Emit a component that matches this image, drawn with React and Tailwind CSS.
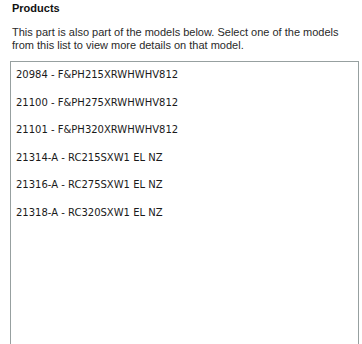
export default function App() {
  const items = [
    "20984 - F&PH215XRWHWHV812",
    "21100 - F&PH275XRWHWHV812",
    "21101 - F&PH320XRWHWHV812",
    "21314-A - RC215SXW1 EL NZ",
    "21316-A - RC275SXW1 EL NZ",
    "21318-A - RC320SXW1 EL NZ",
  ];
  return (
    <div className="w-[362px] h-[344px] overflow-hidden bg-white pt-[2px]">
      <div className="pl-[12px] pr-[8px] text-[11px] leading-[13px] text-[#222]" style={{ fontFamily: '"Liberation Sans", Arial, sans-serif' }}>
        <h2 className="font-bold text-[11px] leading-[13px] text-[#111]">Products</h2>
        <p className="mt-[11px] text-[#2a2a2a]">
          This part is also part of the models below. Select one of the models from this list to view more details on that model.
        </p>
      </div>
      <div
        className="ml-[10px] mt-[9px] w-[349px] h-[300px] border border-[#97a0a0] bg-white pl-[5px] text-[10px] text-[#1a1a1a]"
        style={{ fontFamily: '"DejaVu Sans", Verdana, sans-serif' }}
      >
        <ul>
          {items.map((t) => (
            <li key={t} className="pt-[7px] pb-[8px] leading-[12.5px] whitespace-nowrap">
              {t}
            </li>
          ))}
        </ul>
      </div>
    </div>
  );
}
